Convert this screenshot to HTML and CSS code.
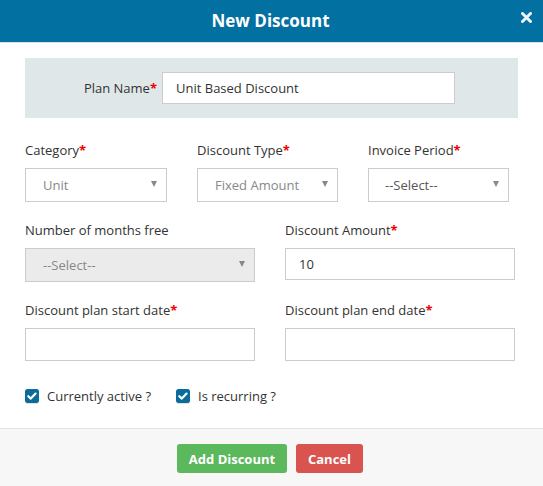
FILE: index.html
```html
<!DOCTYPE html>
<html>
<head>
<meta charset="utf-8">
<link rel="stylesheet" href="styles.css">
</head>
<body>
<div class="modal">
  <div class="modal-header">
    <h1 class="title">New Discount</h1>
    <span class="close"><svg width="11" height="11" viewBox="0 0 11 11"><path d="M1.5 1.5 L9.5 9.5 M9.5 1.5 L1.5 9.5" stroke="#eef4f7" stroke-width="3" stroke-linecap="round"/></svg></span>
  </div>
  <div class="modal-body">
    <div class="plan-panel">
      <label class="plan-label">Plan Name<span class="req">*</span></label>
      <div class="input plan-input">Unit Based Discount</div>
    </div>
    <div class="row three">
      <div class="field">
        <label class="lbl">Category<span class="req">*</span></label>
        <div class="select muted"><span>Unit</span><i class="caret"></i></div>
      </div>
      <div class="field">
        <label class="lbl">Discount Type<span class="req">*</span></label>
        <div class="select muted"><span>Fixed Amount</span><i class="caret"></i></div>
      </div>
      <div class="field">
        <label class="lbl">Invoice Period<span class="req">*</span></label>
        <div class="select dark"><span>--Select--</span><i class="caret"></i></div>
      </div>
    </div>
    <div class="row two">
      <div class="field">
        <label class="lbl">Number of months free</label>
        <div class="select disabled"><span>--Select--</span><i class="caret"></i></div>
      </div>
      <div class="field">
        <label class="lbl">Discount Amount<span class="req">*</span></label>
        <div class="input">10</div>
      </div>
    </div>
    <div class="row two">
      <div class="field">
        <label class="lbl">Discount plan start date<span class="req">*</span></label>
        <div class="input date"></div>
      </div>
      <div class="field">
        <label class="lbl">Discount plan end date<span class="req">*</span></label>
        <div class="input date"></div>
      </div>
    </div>
    <div class="checks">
      <label class="check"><span class="box"><svg width="14" height="14" viewBox="0 0 14 14"><rect x="0" y="0" width="14" height="14" rx="2.5" fill="#0b6c9c"/><path d="M3.3 7.2 L5.8 9.6 L10.6 4.6" stroke="#fff" stroke-width="2.2" fill="none" stroke-linecap="round" stroke-linejoin="round"/></svg></span>Currently active ?</label>
      <label class="check"><span class="box"><svg width="14" height="14" viewBox="0 0 14 14"><rect x="0" y="0" width="14" height="14" rx="2.5" fill="#0b6c9c"/><path d="M3.3 7.2 L5.8 9.6 L10.6 4.6" stroke="#fff" stroke-width="2.2" fill="none" stroke-linecap="round" stroke-linejoin="round"/></svg></span>Is recurring ?</label>
    </div>
  </div>
  <div class="modal-footer">
    <button class="btn btn-success">Add Discount</button>
    <button class="btn btn-danger">Cancel</button>
  </div>
</div>
</body>
</html>
```
FILE: styles.css
```css
* { box-sizing: border-box; }
html, body { margin: 0; padding: 0; background: #fff; }
body {
  font-family: "Open Sans", "DejaVu Sans", sans-serif;
  font-size: 13px;
  color: #333;
  width: 543px;
  height: 486px;
  overflow: hidden;
}
.modal { display: flex; flex-direction: column; height: 486px; }
.modal-header {
  position: relative;
  height: 43px;
  background: #0270a1;
  border-bottom: 1px solid #d9dfe2;
  display: flex;
  align-items: center;
  justify-content: center;
}
.title {
  margin: 0;
  font-size: 17px;
  font-weight: 700;
  color: #fff;
  line-height: 42px;
  padding-right: 2px;
}
.close {
  position: absolute;
  right: 11px;
  top: 12px;
  width: 11px;
  height: 11px;
  display: block;
  line-height: 0;
}
.modal-body { padding: 15px 25px 0 25px; flex: 1; }
.plan-panel {
  background: #dfe7e9;
  height: 60px;
  display: flex;
  align-items: center;
}
.plan-label {
  width: 137px;
  text-align: right;
  padding-right: 5px;
  color: #333;
}
.req { color: #e00; font-weight: 700; }
.input {
  height: 32px;
  border: 1px solid #ccc;
  background: #fff;
  padding: 0 13px;
  line-height: 30px;
  color: #333;
}
.plan-input { width: 293px; }
.row { display: grid; column-gap: 30px; }
.row.three { grid-template-columns: 142px 141px 141px; margin-top: 23px; }
.row.two { grid-template-columns: 230px 230px; margin-top: 19px; }
.field { display: flex; flex-direction: column; }
.lbl { line-height: 18px; margin-bottom: 9px; display: block; }
.select {
  height: 34px;
  border: 1px solid #ccc;
  background: #fff;
  display: flex;
  align-items: center;
  justify-content: space-between;
  padding: 0 9px 0 17px;
}
.select.muted { color: #888; }
.select.dark { color: #555; padding-left: 16px; }
.select.disabled { background: #ebebeb; color: #888; }
.caret {
  width: 0; height: 0;
  border-left: 3.5px solid transparent;
  border-right: 3.5px solid transparent;
  border-top: 6px solid #888;
  margin-top: -2px;
}
.input.date { height: 33px; }
.checks {
  display: flex;
  gap: 25px;
  margin-top: 26px;
  align-items: center;
}
.check { display: flex; align-items: center; line-height: 18px; }
.box {
  width: 14px; height: 14px;
  margin-right: 8px;
  line-height: 0;
  box-shadow: 0 2px 0 -1px #e3e3e3;
}
.modal-footer {
  height: 58px;
  border-top: 1px solid #e2e2e2;
  background: #f7f7f7;
  display: flex;
  justify-content: center;
  align-items: flex-start;
  padding-top: 15px;
  padding-right: 3px;
  gap: 9px;
}
.btn {
  height: 29px;
  border: none;
  border-radius: 3px;
  font-family: "Open Sans", "DejaVu Sans", sans-serif;
  font-weight: 700;
  font-size: 13px;
  color: #fff;
  padding: 0 11px;
}
.btn-success { background: #5cb85c; width: 110px; }
.btn-danger { background: #d9534f; width: 67px; }
```
